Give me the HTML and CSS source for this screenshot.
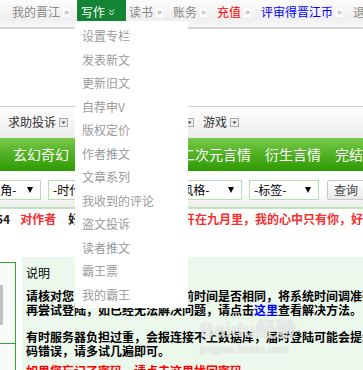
FILE: index.html
```html
<!DOCTYPE html>
<html lang="zh-CN">
  <head>
    <meta charset="UTF-8" />
    <title>晋江文学城 - 写作</title>
    <link rel="stylesheet" href="styles.css">
  </head>
  <body>
    <div class="page">
      <div class="topbar">
        <a class="item">我的晋江<i class="raq">»</i></a>
        <a class="item tab">写作
          <svg class="dchev" width="7" height="7" viewBox="0 0 7 7"><path d="M1 0.5l2.5 2.5L6 0.5M1 3.5l2.5 2.5L6 3.5" fill="none" stroke="#fff" stroke-width="1"/></svg>
        </a>
        <a class="item next">读书<i class="raq">»</i></a>
        <a class="item">账务<i class="raq">»</i></a>
        <a class="item red">充值<i class="raq">»</i></a>
        <a class="item blue">评审得晋江币<i class="raq">»</i></a>
        <a class="item">退出</a>
      </div>

      <div class="subnav">
        <span class="item">求助投诉<svg class="dd" width="9" height="9" viewBox="0 0 9 9"><rect x="0.5" y="0.5" width="8" height="8" fill="#eee" stroke="#aaa"/><path d="M2.5 3.5h4L4.5 6z" fill="#444"/></svg></span>
        <span class="item">晋江论坛<svg class="dd" width="9" height="9" viewBox="0 0 9 9"><rect x="0.5" y="0.5" width="8" height="8" fill="#eee" stroke="#aaa"/><path d="M2.5 3.5h4L4.5 6z" fill="#444"/></svg></span>
        <span class="item">手机版<svg class="dd" width="9" height="9" viewBox="0 0 9 9"><rect x="0.5" y="0.5" width="8" height="8" fill="#eee" stroke="#aaa"/><path d="M2.5 3.5h4L4.5 6z" fill="#444"/></svg></span>
        <span class="item">游戏<svg class="dd" width="9" height="9" viewBox="0 0 9 9"><rect x="0.5" y="0.5" width="8" height="8" fill="#eee" stroke="#aaa"/><path d="M2.5 3.5h4L4.5 6z" fill="#444"/></svg></span>
      </div>

      <div class="catbar">
        <span>玄幻奇幻</span>
        <span>现代都市言情</span>
        <span>二次元言情</span>
        <span>衍生言情</span>
        <span>完结</span>
      </div>

      <div class="filter">
        <div class="sel first"><span>-主角-</span><i class="arrow"></i></div>
        <div class="sel"><span>-时代-</span><i class="arrow"></i></div>
        <div class="sel small"><span>-类型-</span></div>
        <div class="sel"><span>-风格-</span><i class="arrow"></i></div>
        <div class="sel"><span>-标签-</span><i class="arrow"></i></div>
        <button type="button" class="btn">查询</button>
      </div>

      <div class="marquee">
        <span class="num">54</span>
        <span class="hot">对作者</span>
        <span class="plain">好文推荐</span>
        <span class="hot">开在九月里，我的心中只有你，好</span>
      </div>

      <div class="main">
        <div class="side">
          <div class="side-bar"></div>
          <div class="side-line"></div>
        </div>
        <div class="panel">
          <div class="title">说明</div>
          <p>请核对您电脑时间与服务器当前时间是否相同，将系统时间调准确后再尝试登陆，如已经无法解决问题，请点击<a class="link">这里</a>查看解决方法。</p>
          <p>有时服务器负担过重，会报连接不上数据库，届时登陆可能会提示密码错误，请多试几遍即可。</p>
          <p class="warn">如果您忘记了密码，请点击这里找回密码。</p>
        </div>
      </div>

      <div class="menu">
        <a>设置专栏</a>
        <a>发表新文</a>
        <a>更新旧文</a>
        <a>自荐申V</a>
        <a>版权定价</a>
        <a>作者推文</a>
        <a>文章系列</a>
        <a>我收到的评论</a>
        <a>盗文投诉</a>
        <a>读者推文</a>
        <a>霸王票</a>
        <a>我的霸王</a>
      </div>

      <div class="mark">
        <div class="mark-logo">Baidu经验</div>
        <div class="mark-url">jingyan.baidu.com</div>
      </div>
    </div>
  </body>
</html>
```

FILE: styles.css
```css
body {
  margin: 0;
  font: 12px/1.2 "Noto Sans CJK SC", "Noto Sans", sans-serif;
  color: #000;
  background: #fff;
}
.page {
  position: relative;
  width: 363px;
  height: 370px;
  overflow: hidden;
}
a {
  text-decoration: none;
  cursor: pointer;
}

/* top bar */
.topbar {
  display: flex;
  height: 27px;
  padding-left: 7px;
  background: linear-gradient(#fcfcfc, #efefef 70%, #f7f7f7);
  border-bottom: 2px solid #d6d6d6;
  white-space: nowrap;
}
.topbar .item {
  display: flex;
  align-items: center;
  box-sizing: border-box;
  height: 21px;
  padding: 3px 5px 0;
  line-height: 18px;
  color: #888;
}
.topbar .tab {
  margin-left: 2px;
  padding: 3px 11px 0 4px;
  background: #128434;
  color: #fff;
}
.topbar .next {
  margin-left: -2px;
}
.topbar .red {
  color: #f00;
}
.topbar .blue {
  color: #00f;
}
.raq {
  display: inline-block;
  width: 7px;
  height: 9px;
  margin-left: 3px;
  background: #fff;
  color: #999;
  font: 9px/9px "DejaVu Sans", sans-serif;
  font-style: normal;
  text-align: center;
}
.dchev {
  margin-left: 3px;
}

/* sub navigation */
.subnav {
  display: flex;
  align-items: center;
  height: 31px;
  margin-top: 77px;
  padding-left: 8px;
  border-top: 1px solid #cfcfcf;
  background: linear-gradient(#fff, #ececec);
  color: #333;
  white-space: nowrap;
}
.subnav .item {
  display: flex;
  align-items: center;
  margin-right: 9px;
}
.subnav .dd {
  margin-left: 3px;
}

/* category bar */
.catbar {
  display: flex;
  align-items: center;
  gap: 14px;
  height: 33px;
  padding-left: 13px;
  background: linear-gradient(#7acb4c, #58b42a 40%, #2f9a03);
  color: #fff;
  font-size: 14px;
  white-space: nowrap;
}

/* filters */
.filter {
  display: flex;
  gap: 7px;
  height: 27px;
  padding-top: 9px;
  background: linear-gradient(#fff 55%, #ececec);
  border-bottom: 2px solid #c3e4bd;
  white-space: nowrap;
}
.sel {
  display: flex;
  align-items: center;
  flex: none;
  box-sizing: border-box;
  width: 70px;
  height: 20px;
  padding: 0 7px 0 4px;
  border: 1px solid #b7ddb1;
  background: #fff;
}
.sel.first {
  width: 62px;
  margin-left: -21px;
}
.sel.small {
  width: 40px;
}
.arrow {
  margin-left: auto;
  width: 0;
  height: 0;
  border-left: 3px solid transparent;
  border-right: 3px solid transparent;
  border-top: 6px solid #000;
}
.btn {
  flex: none;
  height: 20px;
  margin-left: 1px;
  padding: 0 6px;
  border: 1px solid #c9c9c9;
  border-radius: 2px;
  background: linear-gradient(#fff, #e9e9e9);
  color: #444;
  font: inherit;
  line-height: 16px;
}

/* scrolling line */
.marquee {
  display: flex;
  height: 20px;
  line-height: 20px;
  font-weight: bold;
  white-space: nowrap;
}
.marquee .num {
  margin-left: -4px;
  color: #222;
}
.marquee .hot {
  color: #f43030;
}
.marquee .num + .hot {
  margin-left: 10px;
}
.marquee .plain {
  width: 120px;
  margin-left: 12px;
  color: #222;
}

/* main */
.main {
  display: flex;
  align-items: flex-start;
  margin-top: 28px;
}
.side {
  flex: none;
  width: 17px;
  height: 130px;
  margin: 5px 6px 0 -1px;
  box-sizing: border-box;
  border: 1px solid #36a336;
  background: #f8fcf8;
}
.side-bar {
  width: 3px;
  height: 40px;
  margin-top: 22px;
  background: #c2c2c2;
}
.side-line {
  margin-top: 18px;
  border-top: 1px solid #36a336;
}
.panel {
  flex: none;
  width: 380px;
  min-height: 130px;
  padding: 9px 4px;
  background: #edf8ed;
}
.panel .title {
  line-height: 14px;
}
.panel p {
  width: 362px;
  margin: 9px 0 0;
  font-weight: bold;
  line-height: 14px;
}
.panel p + p {
  margin-top: 13px;
}
.panel p.warn {
  margin-top: 6px;
  color: #f00;
}
.link {
  color: #00f;
}

/* dropdown */
.menu {
  position: absolute;
  left: 75px;
  top: 21px;
  width: 113px;
  padding: 3px 0 2px;
  background: #fff;
}
.menu a {
  display: block;
  padding-left: 7px;
  line-height: 23.5px;
  color: #9a9a9a;
}

/* watermark */
.mark {
  position: absolute;
  left: 200px;
  top: 318px;
  color: rgba(255, 255, 255, 0.7);
  text-shadow: 0 0 1px rgba(140, 140, 140, 0.6);
  pointer-events: none;
}
.mark-logo {
  font: bold 20px/24px "Liberation Sans", sans-serif;
}
.mark-url {
  font: 11px/14px "Liberation Sans", sans-serif;
}
```
